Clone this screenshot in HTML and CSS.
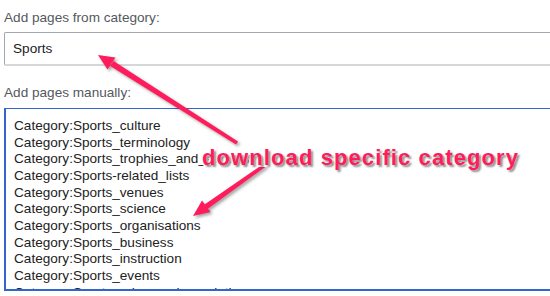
FILE: index.html
```html
<!DOCTYPE html>
<html lang="en">

<head>
    <meta charset="UTF-8">
    <title>Add pages</title>
    <link rel="stylesheet" href="styles.css">
</head>

<body>
    <div class="form">
        <label class="field-label">Add pages from category:</label>
        <div class="input-box">Sports</div>

        <label class="field-label manual">Add pages manually:</label>
        <div class="text-box">
            <div>Category:Sports_culture</div>
            <div>Category:Sports_terminology</div>
            <div>Category:Sports_trophies_and_awards</div>
            <div>Category:Sports-related_lists</div>
            <div>Category:Sports_venues</div>
            <div>Category:Sports_science</div>
            <div>Category:Sports_organisations</div>
            <div>Category:Sports_business</div>
            <div>Category:Sports_instruction</div>
            <div>Category:Sports_events</div>
            <div>Category:Sports_rules_and_regulations</div>
        </div>
    </div>

    <svg class="arrows" width="550" height="296" viewBox="0 0 550 296">
        <polygon points="238,141.5 236,144.5 110.3,66 113.5,61" fill="#fe1c5c"/>
        <polygon points="98,55 115.5,57.5 107.5,69.5" fill="#fe1c5c"/>
        <polygon points="264,163.5 266,166.5 207.5,209 204.5,204.5" fill="#fe1c5c"/>
        <polygon points="193,216 202,200.5 210.5,212" fill="#fe1c5c"/>
    </svg>

    <div class="callout">download specific category</div>
</body>

</html>
```

FILE: styles.css
```css
body {
    margin: 0;
    padding: 0;
    width: 550px;
    height: 296px;
    overflow: hidden;
    background: #fff;
    font-family: 'Liberation Sans', Arial, sans-serif;
    position: relative;
}

.form {
    padding: 10px 0 0 4px;
    display: flex;
    flex-direction: column;
}

.field-label {
    font-size: 13.6px;
    line-height: 16px;
    color: #54595d;
}

.input-box {
    margin-top: 6px;
    width: 600px;
    height: 31px;
    border: 1px solid #a2a9b1;
    border-bottom: 2px solid #d6d7d9;
    border-right: none;
    border-radius: 2px 0 0 2px;
    padding-left: 8px;
    font-size: 13.6px;
    line-height: 31px;
    color: #222;
}

.manual {
    margin-top: 19px;
}

.text-box {
    margin-top: 7px;
    width: 600px;
    height: 183px;
    border: 2px solid #3366cc;
    border-top-width: 1px;
    border-right: none;
    padding: 9px 0 0 8px;
    font-size: 13.6px;
    line-height: 16.67px;
    color: #222;
    overflow: hidden;
    box-sizing: border-box;
}

.arrows {
    position: absolute;
    left: 0;
    top: 0;
    filter: drop-shadow(2px 2px 1.5px rgba(0, 0, 0, 0.35));
}

.callout {
    position: absolute;
    left: 202px;
    top: 145px;
    font-size: 22px;
    font-weight: bold;
    letter-spacing: 1.1px;
    color: #fe1c5c;
    -webkit-text-stroke: 4px #fff;
    paint-order: stroke fill;
    text-shadow: 2px 2px 2px rgba(0, 0, 0, 0.45);
    white-space: nowrap;
}
```
